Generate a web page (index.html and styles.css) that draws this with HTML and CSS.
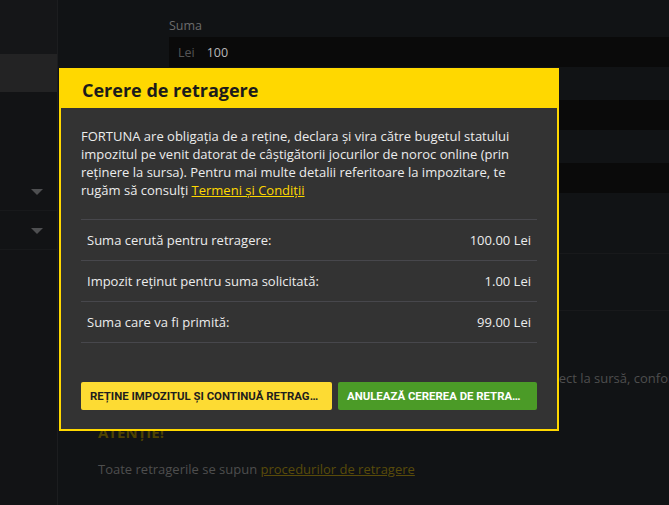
FILE: index.html
```html
<!DOCTYPE html>
<html lang="ro">
<head>
<meta charset="utf-8">
<title>Cerere de retragere</title>
<link rel="stylesheet" href="styles.css">
</head>
<body>
<div class="page">
  <aside class="sidebar">
    <div class="side-top"></div>
    <div class="side-item active"></div>
    <div class="side-spacer"></div>
    <div class="side-item drop"><span class="tri"></span></div>
    <div class="side-item drop"><span class="tri"></span></div>
  </aside>
  <main class="main">
    <form class="form">
      <div class="field-label first">Suma</div>
      <div class="input"><span class="cur">Lei</span><span class="val">100</span></div>
      <div class="field-label">Metoda de retragere</div>
      <div class="input"></div>
      <div class="field-label">Cont</div>
      <div class="input"></div>
    </form>
    <div class="block one"></div>
    <div class="block two"></div>
    <p class="note">Impozitul pe câştiguri din jocurile de noroc online va fi reţinut de Fortuna direct la sursă, conform legislaţiei în vigoare.</p>
    <p class="warn">ATENȚIE!</p>
    <p class="note small">Toate retragerile se supun <a href="#" class="dim-link">procedurilor de retragere</a></p>
  </main>

  <div class="modal">
    <div class="modal-head">Cerere de retragere</div>
    <div class="modal-body">
      <p class="intro">FORTUNA are obligaţia de a reţine, declara şi vira către bugetul statului impozitul pe venit datorat de câştigătorii jocurilor de noroc online (prin reţinere la sursa). Pentru mai multe detalii referitoare la impozitare, te rugăm să consulţi <a href="#" class="link">Termeni şi Condiţii</a></p>
      <div class="rows">
        <div class="row"><span>Suma cerută pentru retragere:</span><span>100.00 Lei</span></div>
        <div class="row"><span>Impozit reţinut pentru suma solicitată:</span><span>1.00 Lei</span></div>
        <div class="row"><span>Suma care va fi primită:</span><span>99.00 Lei</span></div>
      </div>
      <div class="actions">
        <button class="btn btn-yellow" type="button">REȚINE IMPOZITUL ȘI CONTINUĂ RETRAGEREA</button>
        <button class="btn btn-green" type="button">ANULEAZĂ CEREREA DE RETRAGERE</button>
      </div>
    </div>
  </div>
</div>
</body>
</html>
```
FILE: styles.css
```css
* { box-sizing: border-box; }
html, body { margin: 0; padding: 0; }
body {
  background: #111315;
  font-family: "Open Sans", "Noto Sans", sans-serif;
  font-size: 13px;
  color: #e9e9e9;
  width: 669px;
  height: 505px;
  overflow: hidden;
}
.page {
  position: relative;
  display: flex;
  width: 669px;
  height: 505px;
}
.sidebar {
  width: 58px;
  flex: none;
  background: #121315;
  border-right: 1px solid #1c1d1f;
  display: flex;
  flex-direction: column;
}
.side-top { height: 54px; background: #151618; }
.side-item.active { height: 38px; background: #232324; }
.side-spacer { height: 80px; }
.side-item.drop {
  height: 39px;
  border-bottom: 1px solid #18191b;
  display: flex;
  align-items: center;
  justify-content: flex-end;
  padding-right: 14px;
  padding-top: 2px;
}
.side-item.drop:first-of-type { border-top: 1px solid #18191b; }
.tri {
  width: 0; height: 0;
  border-left: 6px solid transparent;
  border-right: 6px solid transparent;
  border-top: 6px solid #4e4f51;
}
.main {
  flex: 1;
  min-width: 0;
  overflow: hidden;
}
.form { margin-left: 111px; }
.field-label {
  height: 33px;
  line-height: 16px;
  padding-top: 14px;
  color: #6c6c6c;
  font-size: 12.5px;
}
.field-label.first { height: 37px; padding-top: 18px; }
.input {
  height: 30px;
  background: #0a0a0a;
  display: flex;
  align-items: center;
  padding-left: 9px;
  gap: 12px;
  font-size: 12.5px;
}
.cur { color: #555; }
.val { color: #b8b8b8; }
.block { border-bottom: 1px solid #18191b; margin-left: 40px; }
.block.one { height: 61px; }
.block.two { height: 57px; }
.note {
  margin: 58px 0 0 40px;
  line-height: 18px;
  color: #4e4e4e;
  white-space: nowrap;
}
.warn {
  margin: 36px 0 0 40px;
  line-height: 18px;
  font-weight: 700;
  font-size: 15px;
  color: #4f4300;
}
.note.small { margin-top: 19px; }
.dim-link { color: #594b0a; text-decoration: underline; }

/* modal */
.modal {
  position: absolute;
  left: 59px;
  top: 68px;
  width: 500px;
  border: 2px solid #ffd800;
  background: #333333;
}
.modal-head {
  height: 38px;
  background: #ffd800;
  color: #1b1b1b;
  font-weight: 700;
  font-size: 18px;
  line-height: 38px;
  padding-left: 21px;
  padding-top: 1px;
}
.modal-body { padding: 19px 20px 19px 20px; }
.intro {
  margin: 0;
  line-height: 18px;
  font-size: 13px;
  color: #ececec;
}
.link { color: #ffd800; text-decoration: underline; }
.rows { margin-top: 20px; border-top: 1px solid #47474c; }
.row {
  height: 41px;
  border-bottom: 1px solid #47474c;
  display: flex;
  align-items: center;
  justify-content: space-between;
  padding: 0 6px;
  color: #ececec;
}
.actions {
  display: flex;
  gap: 6px;
  margin-top: 39px;
}
.btn {
  height: 28px;
  border: 0;
  border-radius: 2px;
  font-family: Roboto, "Liberation Sans", sans-serif;
  font-weight: 700;
  font-size: 11.4px;
  padding: 0 9px;
  white-space: nowrap;
  overflow: hidden;
  text-overflow: ellipsis;
  text-align: center;
}
.btn-yellow { width: 251px; flex: none; background: #fddb33; color: #1e1e1e; }
.btn-green { flex: 1; min-width: 0; background: #4b9b27; color: #ffffff; }
```
